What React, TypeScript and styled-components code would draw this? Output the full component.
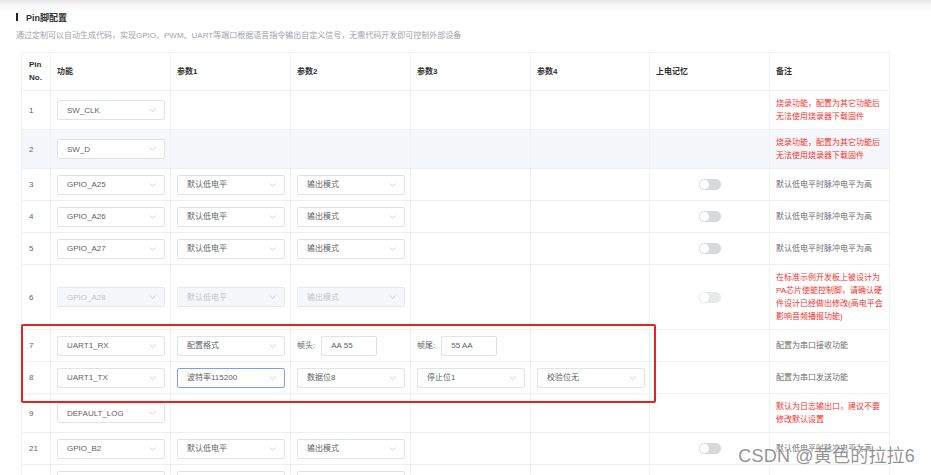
import * as React from "react";
import styled, { createGlobalStyle } from "styled-components";

const GlobalStyle = createGlobalStyle`
  html, body {
    margin: 0;
    padding: 0;
    background: #fff;
  }
  body {
    font-family: "Liberation Sans", "Noto Sans CJK SC", Arial, sans-serif;
    overflow: hidden;
  }
`;

const Page = styled.div`
  position: relative;
  width: 931px;
  height: 475px;
  overflow: hidden;
  padding: 10px 16px 0;
  box-sizing: border-box;
  background: linear-gradient(#e6e6e6 0px, #f7f7f7 5px, #fff 11px);
`;

const Title = styled.div`
  display: flex;
  align-items: center;
  gap: 8px;
  height: 14px;
  font-size: 9px;
  font-weight: bold;
  color: #303133;

  &::before {
    content: "";
    width: 2px;
    height: 8px;
    background: #222;
  }
`;

const Subtitle = styled.div`
  margin-top: 6px;
  height: 12px;
  line-height: 12px;
  font-size: 8px;
  color: #a0a3a8;
`;

const TableWrap = styled.div`
  position: relative;
  margin: 10px 0 0 5px;
  width: 868px;
`;

const Table = styled.table`
  border-collapse: collapse;
  table-layout: fixed;
  width: 868px;
  font-size: 8px;
  color: #606266;
`;

const Th = styled.th`
  text-align: left;
  font-weight: bold;
  color: #303133;
  line-height: 13px;
  padding: 5px 6px 6px;
  border: 1px solid #eef0f5;
  vertical-align: middle;
  height: 26px;
`;

const Tr = styled.tr<{ $shade?: string }>`
  background: ${(p) => p.$shade ?? "#fff"};
`;

const Td = styled.td<{ $pad?: number }>`
  padding: 5.5px ${(p) => p.$pad ?? 6}px;
  border: 1px solid #eef0f5;
  vertical-align: middle;
  line-height: 13px;
  height: 20px;
`;

const Remark = styled.div<{ $warn?: boolean }>`
  padding: 0.5px 0;
  color: ${(p) => (p.$warn ? "#f5302e" : "#6b6e73")};
  line-height: 13px;
`;

const SelectBox = styled.div<{ $disabled?: boolean; $focus?: boolean }>`
  display: flex;
  align-items: center;
  justify-content: space-between;
  box-sizing: border-box;
  width: 108px;
  height: 20px;
  padding: 0 8px 0 9px;
  border: 1px solid
    ${(p) => (p.$focus ? "#7d9ef3" : p.$disabled ? "#e6e8ee" : "#dfe2e8")};
  border-radius: 2px;
  background: ${(p) => (p.$disabled ? "#f5f7fa" : "#fff")};
  color: ${(p) => (p.$disabled ? "#c0c4cc" : "#606266")};
  font-size: 8px;
  white-space: nowrap;
`;

const InlineField = styled.div`
  display: flex;
  align-items: center;
  gap: 6px;
  white-space: nowrap;
`;

const TextInput = styled.div`
  box-sizing: border-box;
  width: 56px;
  height: 20px;
  line-height: 18px;
  padding-left: 9px;
  border: 1px solid #dfe2e8;
  border-radius: 2px;
  color: #606266;
`;

const Center = styled.div`
  display: flex;
  justify-content: center;
`;

const Switch = styled.div<{ $disabled?: boolean }>`
  position: relative;
  width: 22px;
  height: 11px;
  border-radius: 6px;
  background: #d6d8dc;
  opacity: ${(p) => (p.$disabled ? 0.55 : 1)};

  &::after {
    content: "";
    position: absolute;
    left: 1px;
    top: 1px;
    width: 9px;
    height: 9px;
    border-radius: 50%;
    background: #fff;
  }
`;

const Highlight = styled.div`
  position: absolute;
  left: 0;
  top: 272px;
  width: 635px;
  height: 79px;
  box-sizing: border-box;
  border: 2px solid #e8231f;
  border-radius: 2px;
  pointer-events: none;
`;

const Watermark = styled.div`
  position: absolute;
  right: 16px;
  bottom: 8px;
  font-size: 18px;
  color: rgba(110, 110, 110, 0.75);
  text-shadow: 0 0 2px #fff, 0 0 2px #fff;
  letter-spacing: 0.2px;
`;

const Chevron = () => (
  <svg width="7" height="4" viewBox="0 0 7 4">
    <polyline
      points="0.5,0.5 3.5,3.5 6.5,0.5"
      fill="none"
      stroke="#c0c4cc"
      strokeWidth="0.8"
    />
  </svg>
);

const Select = ({
  value,
  disabled,
  focus,
}: {
  value: string;
  disabled?: boolean;
  focus?: boolean;
}) => (
  <SelectBox $disabled={disabled} $focus={focus}>
    <span>{value}</span>
    <Chevron />
  </SelectBox>
);

type Cell =
  | { kind: "select"; value: string; focus?: boolean }
  | { kind: "field"; label: string; value: string }
  | null;

interface Row {
  pin: string;
  func: string;
  params: Cell[];
  memory?: boolean;
  remark: string;
  warn?: boolean;
  disabled?: boolean;
  shade?: string;
}

const sel = (value: string, focus?: boolean): Cell => ({
  kind: "select",
  value,
  focus,
});

const gpioParams = [sel("默认低电平"), sel("输出模式"), null, null];
const burnNote = "烧录功能，配置为其它功能后无法使用烧录器下载固件";
const pulseNote = "默认低电平时脉冲电平为高";

const rows: Row[] = [
  { pin: "1", func: "SW_CLK", params: [null, null, null, null], remark: burnNote, warn: true },
  {
    pin: "2",
    func: "SW_D",
    params: [null, null, null, null],
    remark: burnNote,
    warn: true,
    shade: "#f5f7fa",
  },
  { pin: "3", func: "GPIO_A25", params: gpioParams, memory: true, remark: pulseNote },
  { pin: "4", func: "GPIO_A26", params: gpioParams, memory: true, remark: pulseNote },
  { pin: "5", func: "GPIO_A27", params: gpioParams, memory: true, remark: pulseNote },
  {
    pin: "6",
    func: "GPIO_A28",
    params: gpioParams,
    memory: true,
    disabled: true,
    remark: "在标准示例开发板上被设计为PA芯片使能控制脚，请确认硬件设计已经做出修改(高电平会影响音频播报功能)",
    warn: true,
  },
  {
    pin: "7",
    func: "UART1_RX",
    params: [
      sel("配置格式"),
      { kind: "field", label: "帧头:", value: "AA 55" },
      { kind: "field", label: "帧尾:", value: "55 AA" },
      null,
    ],
    remark: "配置为串口接收功能",
  },
  {
    pin: "8",
    func: "UART1_TX",
    params: [sel("波特率115200", true), sel("数据位8"), sel("停止位1"), sel("校验位无")],
    remark: "配置为串口发送功能",
  },
  {
    pin: "9",
    func: "DEFAULT_LOG",
    params: [null, null, null, null],
    remark: "默认为日志输出口，建议不要修改默认设置",
    warn: true,
  },
  { pin: "21", func: "GPIO_B2", params: gpioParams, memory: true, remark: pulseNote },
  { pin: "22", func: "GPIO_B3", params: gpioParams, memory: true, remark: pulseNote },
];

const widths = [29, 120, 120, 120, 120, 119, 120, 120];

const ParamCell = ({ cell, disabled }: { cell: Cell; disabled?: boolean }) => {
  if (!cell) return <Td />;
  if (cell.kind === "select")
    return (
      <Td>
        <Select value={cell.value} focus={cell.focus} disabled={disabled} />
      </Td>
    );
  return (
    <Td>
      <InlineField>
        <span>{cell.label}</span>
        <TextInput>{cell.value}</TextInput>
      </InlineField>
    </Td>
  );
};

export default function App() {
  return (
    <>
      <GlobalStyle />
      <Page>
        <Title>Pin脚配置</Title>
        <Subtitle>
          通过定制可以自动生成代码，实现GPIO、PWM、UART等端口根据语音指令输出自定义信号，无需代码开发即可控制外部设备
        </Subtitle>
        <TableWrap>
          <Table>
            <colgroup>
              {widths.map((w, i) => (
                <col key={i} style={{ width: w }} />
              ))}
            </colgroup>
            <thead>
              <tr>
                <Th style={{ paddingLeft: 7 }}>
                  Pin
                  <br />
                  No.
                </Th>
                <Th>功能</Th>
                <Th>参数1</Th>
                <Th>参数2</Th>
                <Th>参数3</Th>
                <Th>参数4</Th>
                <Th>上电记忆</Th>
                <Th>备注</Th>
              </tr>
            </thead>
            <tbody>
              {rows.map((r) => (
                <Tr key={r.pin} $shade={r.shade}>
                  <Td $pad={7}>{r.pin}</Td>
                  <Td>
                    <Select value={r.func} disabled={r.disabled} />
                  </Td>
                  {r.params.map((c, i) => (
                    <ParamCell key={i} cell={c} disabled={r.disabled} />
                  ))}
                  <Td>
                    {r.memory && (
                      <Center>
                        <Switch $disabled={r.disabled} />
                      </Center>
                    )}
                  </Td>
                  <Td>
                    <Remark $warn={r.warn}>{r.remark}</Remark>
                  </Td>
                </Tr>
              ))}
            </tbody>
          </Table>
          <Highlight />
        </TableWrap>
        <Watermark>CSDN @黄色的拉拉6</Watermark>
      </Page>
    </>
  );
}
